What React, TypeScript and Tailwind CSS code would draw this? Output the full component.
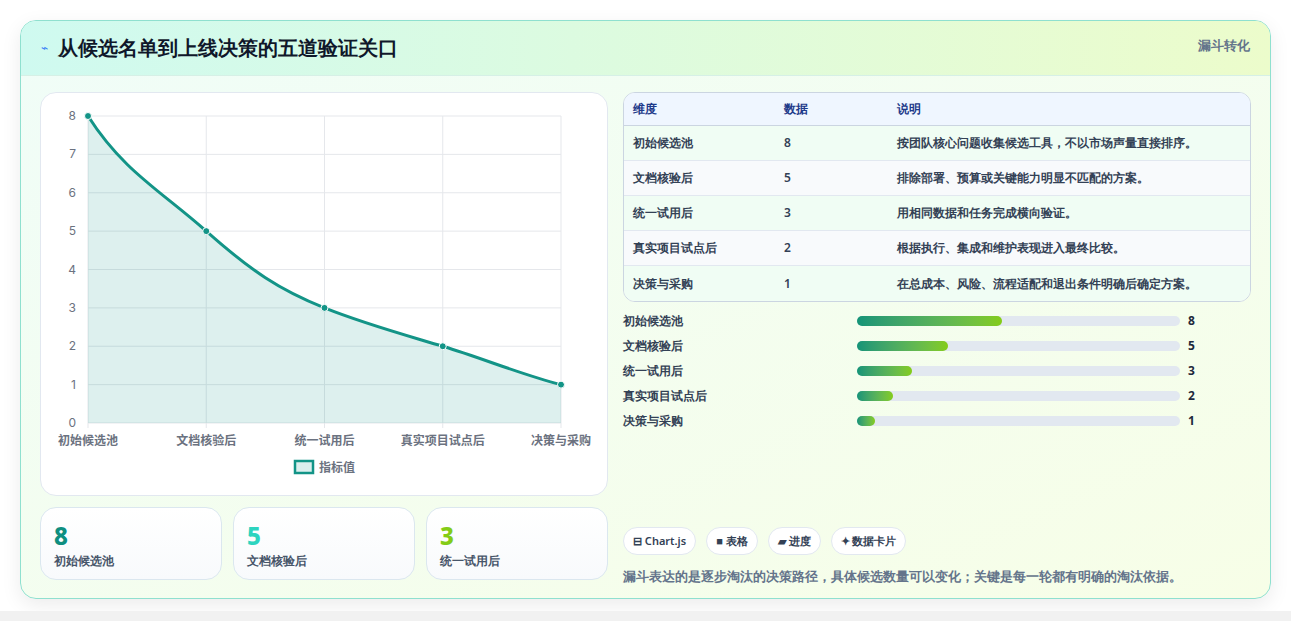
import React from "react";

const rows = [
  { name: "初始候选池", v: 8, note: "按团队核心问题收集候选工具，不以市场声量直接排序。" },
  { name: "文档核验后", v: 5, note: "排除部署、预算或关键能力明显不匹配的方案。" },
  { name: "统一试用后", v: 3, note: "用相同数据和任务完成横向验证。" },
  { name: "真实项目试点后", v: 2, note: "根据执行、集成和维护表现进入最终比较。" },
  { name: "决策与采购", v: 1, note: "在总成本、风险、流程适配和退出条件明确后确定方案。" },
];

const Chart: React.FC = () => {
  const x0 = 47, x1 = 520, y0 = 23, y1 = 330;
  const xs = rows.map((_, i) => x0 + ((x1 - x0) * i) / 4);
  const ys = rows.map((r) => y1 - ((y1 - y0) * r.v) / 8);
  const line = `M${xs[0]},${ys[0]} C${xs[0] + 35},${ys[0] + 55} ${xs[1] - 45},${ys[1] - 40} ${xs[1]},${ys[1]} C${xs[1] + 45},${ys[1] + 40} ${xs[2] - 45},${ys[2] - 18} ${xs[2]},${ys[2]} C${xs[2] + 40},${ys[2] + 16} ${xs[3] - 40},${ys[3] - 12} ${xs[3]},${ys[3]} C${xs[3] + 40},${ys[3] + 12} ${xs[4] - 40},${ys[4] - 10} ${xs[4]},${ys[4]}`;
  return (
    <svg width="568" height="404" className="block">
      {[0, 1, 2, 3, 4, 5, 6, 7, 8].map((t) => {
        const y = y1 - ((y1 - y0) * t) / 8;
        return (
          <g key={t}>
            <line x1={x0} x2={x1} y1={y} y2={y} stroke="#e5e7eb" />
            <text x={x0 - 12} y={y + 4} fontSize="12" fill="#6b7280" textAnchor="end" fontFamily="Inter, sans-serif">{t}</text>
          </g>
        );
      })}
      {xs.map((x, i) => (
        <g key={i}>
          <line x1={x} x2={x} y1={y0} y2={y1 + 5} stroke="#e5e7eb" />
          <text x={x} y={352} fontSize="12" fontWeight="600" fill="#6b7280" textAnchor="middle" fontFamily="'Noto Sans CJK SC', sans-serif">{rows[i].name}</text>
        </g>
      ))}
      <path d={`${line} L${x1},${y1} L${x0},${y1} Z`} fill="#0f9488" fillOpacity="0.14" />
      <path d={line} fill="none" stroke="#139487" strokeWidth="3" />
      {xs.map((x, i) => (
        <circle key={i} cx={x} cy={ys[i]} r="3.5" fill="#139487" stroke="#fff" strokeWidth="1" />
      ))}
      <rect x="254" y="368" width="18" height="12" fill="#dcefee" stroke="#139487" strokeWidth="2.5" />
      <text x="278" y="379" fontSize="12" fontWeight="600" fill="#6b7280" fontFamily="'Noto Sans CJK SC', sans-serif">指标值</text>
    </svg>
  );
};

export default function App() {
  const stats = [
    { v: 8, label: "初始候选池", c: "text-[#0f8f80]" },
    { v: 5, label: "文档核验后", c: "text-[#2dd4bf]" },
    { v: 3, label: "统一试用后", c: "text-[#84cc16]" },
  ];
  return (
    <div className="w-[1291px] h-[621px] bg-white font-['Inter','Noto_Sans_CJK_SC',sans-serif] text-[#1e293b]">
      <div className="h-[611px] pt-5 px-5">
        <div className="h-[579px] rounded-2xl border border-[#8fe0cf] overflow-hidden shadow-[0_6px_20px_rgba(0,0,0,0.08)] bg-gradient-to-br from-[#f0fdf8] to-[#f7fee7]">
          <div className="h-[55px] flex items-center justify-between px-5 bg-gradient-to-r from-[#cffaf0] to-[#ecfccb] border-b border-[#d6f0e6]">
            <div className="flex items-center gap-[10px]">
              <span className="text-[#3b82f6] text-xs">⌁</span>
              <h1 className="text-[20px] font-extrabold text-[#0f172a]">从候选名单到上线决策的五道验证关口</h1>
            </div>
            <span className="text-[13px] font-semibold text-[#64748b] self-start mt-[15px]">漏斗转化</span>
          </div>
          <div className="flex gap-[15px] pl-[19px] pr-[19px] pt-4">
            <div className="w-[568px] flex flex-col gap-[11px]">
              <div className="h-[404px] rounded-2xl border border-[#e2e8f0] bg-white">
                <Chart />
              </div>
              <div className="flex gap-[11px]">
                {stats.map((s) => (
                  <div key={s.label} className="flex-1 h-[73px] rounded-2xl border border-[#dbe7ef] bg-gradient-to-b from-white to-[#f8fafc] px-[13px] pt-[14px]">
                    <div className={`text-[24px] leading-7 font-extrabold ${s.c}`}>{s.v}</div>
                    <div className="text-xs font-semibold text-[#475569] mt-[3px]">{s.label}</div>
                  </div>
                ))}
              </div>
            </div>
            <div className="flex-1 flex flex-col">
              <div className="rounded-xl border border-[#cbd5e1] overflow-hidden bg-white text-xs">
                <div className="flex h-[33px] items-center bg-[#eff6ff] border-b border-[#cbd5e1] font-semibold text-[#1e3a8a]">
                  <div className="w-[160px] pl-[9px]">维度</div>
                  <div className="w-[113px]">数据</div>
                  <div>说明</div>
                </div>
                {rows.map((r, i) => (
                  <div key={r.name} className={`flex h-[35px] items-center font-semibold text-[#334155] ${i < 4 ? "border-b border-[#e2e8f0]" : ""} ${i % 2 ? "bg-[#f8fafc]" : "bg-[#f0fdf4]"}`}>
                    <div className="w-[160px] pl-[9px]">{r.name}</div>
                    <div className="w-[113px]">{r.v}</div>
                    <div>{r.note}</div>
                  </div>
                ))}
              </div>
              <div className="flex flex-col gap-[7px] mt-[10px]">
                {rows.map((r) => (
                  <div key={r.name} className="flex items-center h-[18px] text-xs font-semibold text-[#334155]">
                    <div className="w-[234px]">{r.name}</div>
                    <div className="w-[323px] h-[10px] rounded-full bg-[#e2e8f0]">
                      <div className="h-full rounded-full bg-gradient-to-r from-[#129477] to-[#84cc16]" style={{ width: `${(r.v / 8) * 45}%` }} />
                    </div>
                    <div className="ml-2 font-bold text-[#1e293b]">{r.v}</div>
                  </div>
                ))}
              </div>
              <div className="flex gap-[10px] mt-[97px]">
                {["⊟ Chart.js", "■ 表格", "▰ 进度", "✦ 数据卡片"].map((c) => (
                  <span key={c} className="h-[28px] px-[9px] flex items-center rounded-full border border-[#e2e8f0] bg-white text-[11px] font-semibold text-[#334155]">{c}</span>
                ))}
              </div>
              <p className="mt-[12px] text-[13px] font-semibold text-[#64748b]">漏斗表达的是逐步淘汰的决策路径，具体候选数量可以变化；关键是每一轮都有明确的淘汰依据。</p>
            </div>
          </div>
        </div>
      </div>
      <div className="h-[10px] bg-[#f1f1f1]" />
    </div>
  );
}
